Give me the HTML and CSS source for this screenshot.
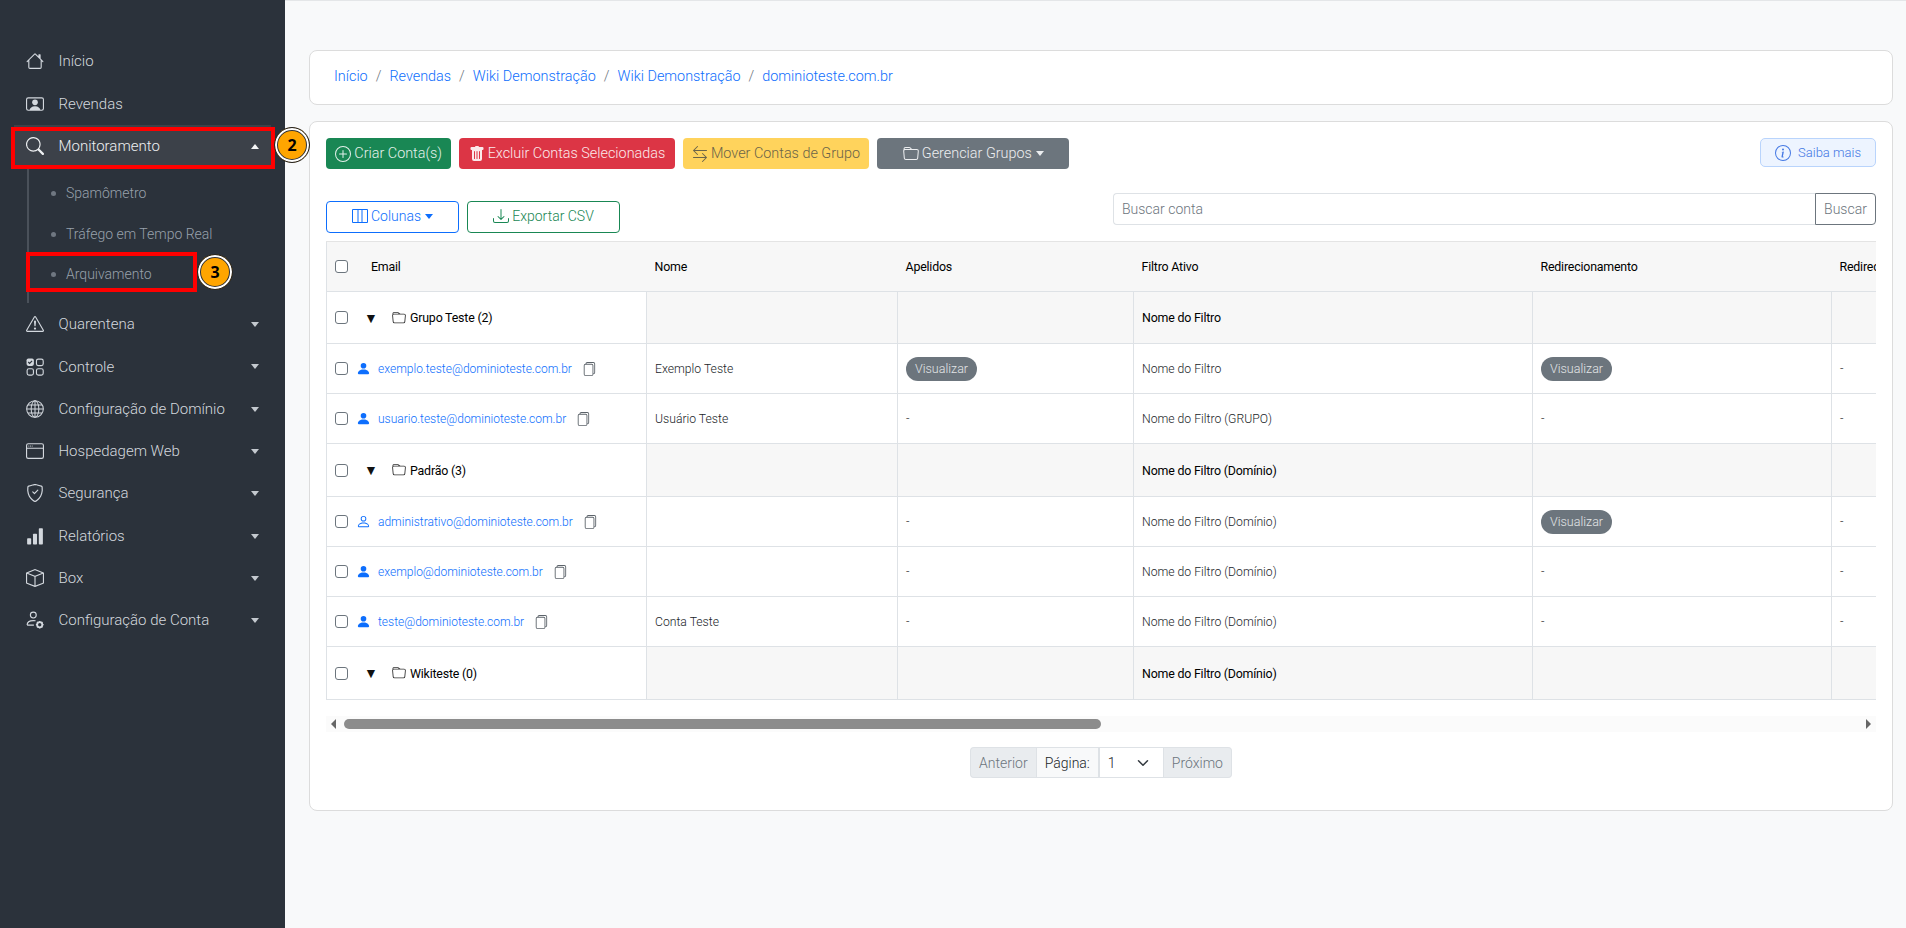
FILE: index.html
```html
<!DOCTYPE html>
<html lang="pt-BR">

<head>
    <meta charset="UTF-8">
    <title>Contas</title>
    <link rel="stylesheet" href="styles.css">
</head>

<body>
    <svg class="sprite" xmlns="http://www.w3.org/2000/svg">
        <symbol id="i-house" viewBox="0 0 16 16"><path d="M8.707 1.5a1 1 0 0 0-1.414 0L.646 8.146a.5.5 0 0 0 .708.708L2 8.207V13.5A1.5 1.5 0 0 0 3.5 15h9a1.5 1.5 0 0 0 1.5-1.5V8.207l.646.647a.5.5 0 0 0 .708-.708L13 5.793V2.5a.5.5 0 0 0-.5-.5h-1a.5.5 0 0 0-.5.5v1.293zM13 7.207V13.5a.5.5 0 0 1-.5.5h-9a.5.5 0 0 1-.5-.5V7.207l5-5z"/></symbol>
        <symbol id="i-video" viewBox="0 0 16 16"><path d="M8 9.05a2.5 2.5 0 1 0 0-5 2.5 2.5 0 0 0 0 5"/><path d="M2 2a2 2 0 0 0-2 2v8a2 2 0 0 0 2 2h12a2 2 0 0 0 2-2V4a2 2 0 0 0-2-2zm10.798 11c-.453-1.27-1.76-3-4.798-3-3.037 0-4.345 1.73-4.798 3H2a1 1 0 0 1-1-1V4a1 1 0 0 1 1-1h12a1 1 0 0 1 1 1v8a1 1 0 0 1-1 1z"/></symbol>
        <symbol id="i-search" viewBox="0 0 16 16"><path d="M11.742 10.344a6.5 6.5 0 1 0-1.397 1.398h-.001q.044.06.098.115l3.85 3.85a1 1 0 0 0 1.415-1.414l-3.85-3.85a1 1 0 0 0-.115-.1zM12 6.5a5.5 5.5 0 1 1-11 0 5.5 5.5 0 0 1 11 0"/></symbol>
        <symbol id="i-warn" viewBox="0 0 16 16"><path d="M7.938 2.016A.13.13 0 0 1 8.002 2a.13.13 0 0 1 .063.016.15.15 0 0 1 .054.057l6.857 11.667c.036.06.035.124.002.183a.2.2 0 0 1-.054.06.1.1 0 0 1-.066.017H1.146a.1.1 0 0 1-.066-.017.2.2 0 0 1-.054-.06.18.18 0 0 1 .002-.183L7.884 2.073a.15.15 0 0 1 .054-.057m1.044-.45a1.13 1.13 0 0 0-1.96 0L.165 13.233c-.457.778.091 1.767.98 1.767h13.713c.889 0 1.438-.99.98-1.767z"/><path d="M7.002 12a1 1 0 1 1 2 0 1 1 0 0 1-2 0M7.1 5.995a.905.905 0 1 1 1.8 0l-.35 3.507a.552.552 0 0 1-1.1 0z"/></symbol>
        <symbol id="i-grid" viewBox="0 0 16 16"><rect x=".5" y=".5" width="6.5" height="6.5" rx="1.6"/><path d="M2 3.6l1.2 1.2L5.4 2.5" fill="none" stroke="#2b323b" stroke-width="1.1"/><rect x="9.3" y="1" width="6" height="5.8" rx="1.6" fill="none" stroke="currentColor"/><rect x="1" y="9.6" width="5.6" height="5.6" rx="1.6" fill="none" stroke="currentColor"/><rect x="9.3" y="9.6" width="6" height="5.6" rx="1.6" fill="none" stroke="currentColor"/></symbol>
        <symbol id="i-globe" viewBox="0 0 16 16"><g fill="none" stroke="currentColor" stroke-width=".9"><circle cx="8" cy="8" r="7.4"/><ellipse cx="8" cy="8" rx="3.4" ry="7.4"/><path d="M8 .6v14.8M.6 8h14.8M1.6 4.4h12.8M1.6 11.6h12.8"/></g></symbol>
        <symbol id="i-window" viewBox="0 0 16 16"><path d="M2.5 4a.5.5 0 1 0 0-1 .5.5 0 0 0 0 1m2-.5a.5.5 0 1 1-1 0 .5.5 0 0 1 1 0m1 .5a.5.5 0 1 0 0-1 .5.5 0 0 0 0 1"/><path d="M2 1a2 2 0 0 0-2 2v10a2 2 0 0 0 2 2h12a2 2 0 0 0 2-2V3a2 2 0 0 0-2-2zm13 2v2H1V3a1 1 0 0 1 1-1h12a1 1 0 0 1 1 1M2 14a1 1 0 0 1-1-1V6h14v7a1 1 0 0 1-1 1z"/></symbol>
        <symbol id="i-shield" viewBox="0 0 16 16"><path d="M5.338 1.59a61 61 0 0 0-2.837.856.48.48 0 0 0-.328.39c-.554 4.157.726 7.19 2.253 9.188a10.7 10.7 0 0 0 2.287 2.233c.346.244.652.42.893.533q.18.085.293.118a1 1 0 0 0 .101.025 1 1 0 0 0 .1-.025q.114-.034.294-.118c.24-.113.547-.29.893-.533a10.7 10.7 0 0 0 2.287-2.233c1.527-1.997 2.807-5.031 2.253-9.188a.48.48 0 0 0-.328-.39c-.651-.213-1.75-.56-2.837-.855C9.552 1.29 8.531 1.067 8 1.067c-.53 0-1.552.223-2.662.524zM5.072.56C6.157.265 7.31 0 8 0s1.843.265 2.928.56c1.11.3 2.229.655 2.887.87a1.54 1.54 0 0 1 1.044 1.262c.596 4.477-.787 7.795-2.465 9.99a11.8 11.8 0 0 1-2.517 2.453 7 7 0 0 1-1.048.625c-.28.132-.581.24-.829.24s-.548-.108-.829-.24a7 7 0 0 1-1.048-.625 11.8 11.8 0 0 1-2.517-2.453C1.928 10.487.545 7.169 1.141 2.692A1.54 1.54 0 0 1 2.185 1.43 63 63 0 0 1 5.072.56"/><path d="M10.854 5.146a.5.5 0 0 1 0 .708l-3 3a.5.5 0 0 1-.708 0l-1.5-1.5a.5.5 0 1 1 .708-.708L7.5 7.793l2.646-2.647a.5.5 0 0 1 .708 0"/></symbol>
        <symbol id="i-bars" viewBox="0 0 16 16"><rect x="1" y="10" width="3.6" height="5.5" rx=".7"/><rect x="6.2" y="6" width="3.6" height="9.5" rx=".7"/><rect x="11.4" y="1" width="3.6" height="14.5" rx=".7"/></symbol>
        <symbol id="i-box" viewBox="0 0 16 16"><path d="M8.186 1.113a.5.5 0 0 0-.372 0L1.846 3.5 8 5.961 14.154 3.5zM15 4.239l-6.5 2.6v7.922l6.5-2.6V4.24zM7.5 14.762V6.838L1 4.239v7.925zM7.443.184a1.5 1.5 0 0 1 1.114 0l7.129 2.852A.5.5 0 0 1 16 3.5v8.662a1 1 0 0 1-.629.928l-7.185 2.874a.5.5 0 0 1-.372 0L.63 13.09a1 1 0 0 1-.63-.928V3.5a.5.5 0 0 1 .314-.464z"/></symbol>
        <symbol id="i-gear" viewBox="0 0 16 16"><circle cx="6.5" cy="3.6" r="2.6" fill="none" stroke="currentColor"/><path d="M1 12.5c0-2.6 2.2-4 5.5-4 .7 0 1.4.1 2 .2M1 12.5h6" fill="none" stroke="currentColor"/><circle cx="12.2" cy="12.2" r="2.3" fill="none" stroke="currentColor" stroke-width="1.6"/><path d="M12.2 8.8v1.2M12.2 14.4v1.2M8.8 12.2H10M14.4 12.2h1.2M9.8 9.8l.8.8M13.8 13.8l.8.8M14.6 9.8l-.8.8M10.6 13.8l-.8.8" stroke="currentColor" stroke-width="1.1"/></symbol>
        <symbol id="i-plus" viewBox="0 0 16 16"><path d="M8 15A7 7 0 1 1 8 1a7 7 0 0 1 0 14m0 1A8 8 0 1 0 8 0a8 8 0 0 0 0 16"/><path d="M8 4a.5.5 0 0 1 .5.5v3h3a.5.5 0 0 1 0 1h-3v3a.5.5 0 0 1-1 0v-3h-3a.5.5 0 0 1 0-1h3v-3A.5.5 0 0 1 8 4"/></symbol>
        <symbol id="i-trash" viewBox="0 0 16 16"><path d="M2.5 1a1 1 0 0 0-1 1v1a1 1 0 0 0 1 1H3v9a2 2 0 0 0 2 2h6a2 2 0 0 0 2-2V4h.5a1 1 0 0 0 1-1V2a1 1 0 0 0-1-1H10a1 1 0 0 0-1-1H7a1 1 0 0 0-1 1zm3 4a.5.5 0 0 1 .5.5v7a.5.5 0 0 1-1 0v-7a.5.5 0 0 1 .5-.5M8 5a.5.5 0 0 1 .5.5v7a.5.5 0 0 1-1 0v-7A.5.5 0 0 1 8 5m3 .5v7a.5.5 0 0 1-1 0v-7a.5.5 0 0 1 1 0"/></symbol>
        <symbol id="i-move" viewBox="0 0 16 16"><path d="M1 11.5a.5.5 0 0 0 .5.5h11.793l-3.147 3.146a.5.5 0 0 0 .708.708l4-4a.5.5 0 0 0 0-.708l-4-4a.5.5 0 0 0-.708.708L13.293 11H1.5a.5.5 0 0 0-.5.5m14-7a.5.5 0 0 1-.5.5H2.707l3.147 3.146a.5.5 0 1 1-.708.708l-4-4a.5.5 0 0 1 0-.708l4-4a.5.5 0 1 1 .708.708L2.707 4H14.5a.5.5 0 0 1 .5.5"/></symbol>
        <symbol id="i-folder" viewBox="0 0 16 16"><path d="M.54 3.87.5 3a2 2 0 0 1 2-2h3.672a2 2 0 0 1 1.414.586l.828.828A2 2 0 0 0 9.828 3h3.982a2 2 0 0 1 1.992 2.181l-.637 7A2 2 0 0 1 13.174 14H2.826a2 2 0 0 1-1.991-1.819l-.637-7a2 2 0 0 1 .342-1.31zM2.19 4a1 1 0 0 0-.996 1.09l.637 7a1 1 0 0 0 .995.91h10.348a1 1 0 0 0 .995-.91l.637-7A1 1 0 0 0 13.81 4zm4.69-1.707A1 1 0 0 0 6.172 2H2.5a1 1 0 0 0-1 .981l.006.139q.323-.119.684-.12h5.396z"/></symbol>
        <symbol id="i-columns" viewBox="0 0 16 16"><path d="M0 2a1 1 0 0 1 1-1h14a1 1 0 0 1 1 1v12a1 1 0 0 1-1 1H1a1 1 0 0 1-1-1zm1 0v12h4.5V2zm5.5 0v12h3V2zm4 0v12H15V2z"/></symbol>
        <symbol id="i-download" viewBox="0 0 16 16"><path d="M.5 9.9a.5.5 0 0 1 .5.5v2.5a1 1 0 0 0 1 1h12a1 1 0 0 0 1-1v-2.5a.5.5 0 0 1 1 0v2.5a2 2 0 0 1-2 2H2a2 2 0 0 1-2-2v-2.5a.5.5 0 0 1 .5-.5"/><path d="M7.646 11.854a.5.5 0 0 0 .708 0l3-3a.5.5 0 0 0-.708-.708L8.5 10.293V1.5a.5.5 0 0 0-1 0v8.793L5.354 8.146a.5.5 0 1 0-.708.708z"/></symbol>
        <symbol id="i-info" viewBox="0 0 16 16"><path d="M8 15A7 7 0 1 1 8 1a7 7 0 0 1 0 14m0 1A8 8 0 1 0 8 0a8 8 0 0 0 0 16"/><path d="m8.93 6.588-2.29.287-.082.38.45.083c.294.07.352.176.288.469l-.738 3.468c-.194.897.105 1.319.808 1.319.545 0 1.178-.252 1.465-.598l.088-.416c-.2.176-.492.246-.686.246-.275 0-.375-.193-.304-.533zM9 4.5a1 1 0 1 1-2 0 1 1 0 0 1 2 0"/></symbol>
        <symbol id="i-person" viewBox="0 0 16 16"><path d="M3 14s-1 0-1-1 1-4 6-4 6 3 6 4-1 1-1 1zm5-6a3 3 0 1 0 0-6 3 3 0 0 0 0 6"/></symbol>
        <symbol id="i-person-line" viewBox="0 0 16 16"><path d="M8 8a3 3 0 1 0 0-6 3 3 0 0 0 0 6m2-3a2 2 0 1 1-4 0 2 2 0 0 1 4 0m4 8c0 1-1 1-1 1H3s-1 0-1-1 1-4 6-4 6 3 6 4m-1-.004c-.001-.246-.154-.986-.832-1.664C11.516 10.68 10.289 10 8 10s-3.516.68-4.168 1.332c-.678.678-.83 1.418-.832 1.664z"/></symbol>
        <symbol id="i-copy" viewBox="0 0 16 16"><path d="M13 0H6a2 2 0 0 0-2 2 2 2 0 0 0-2 2v10a2 2 0 0 0 2 2h7a2 2 0 0 0 2-2 2 2 0 0 0 2-2V2a2 2 0 0 0-2-2m0 13V4a2 2 0 0 0-2-2H5a1 1 0 0 1 1-1h7a1 1 0 0 1 1 1v10a1 1 0 0 1-1 1M3 4a1 1 0 0 1 1-1h7a1 1 0 0 1 1 1v10a1 1 0 0 1-1 1H4a1 1 0 0 1-1-1z"/></symbol>
    </svg>

    <aside class="sidebar">
        <nav class="menu">
            <a class="menu-item"><svg class="menu-icon"><use href="#i-house"/></svg>Início</a>
            <a class="menu-item"><svg class="menu-icon"><use href="#i-video"/></svg>Revendas</a>
            <a class="menu-item active"><svg class="menu-icon"><use href="#i-search"/></svg>Monitoramento<span class="caret up"></span>
                <span class="mark mark-main"></span><span class="step step-two">2</span></a>
            <div class="submenu">
                <a class="sub-item">Spamômetro</a>
                <a class="sub-item">Tráfego em Tempo Real</a>
                <a class="sub-item">Arquivamento<span class="mark mark-sub"></span><span class="step step-three">3</span></a>
            </div>
            <a class="menu-item"><svg class="menu-icon"><use href="#i-warn"/></svg>Quarentena<span class="caret"></span></a>
            <a class="menu-item"><svg class="menu-icon"><use href="#i-grid"/></svg>Controle<span class="caret"></span></a>
            <a class="menu-item"><svg class="menu-icon"><use href="#i-globe"/></svg>Configuração de Domínio<span class="caret"></span></a>
            <a class="menu-item"><svg class="menu-icon"><use href="#i-window"/></svg>Hospedagem Web<span class="caret"></span></a>
            <a class="menu-item"><svg class="menu-icon"><use href="#i-shield"/></svg>Segurança<span class="caret"></span></a>
            <a class="menu-item"><svg class="menu-icon"><use href="#i-bars"/></svg>Relatórios<span class="caret"></span></a>
            <a class="menu-item"><svg class="menu-icon"><use href="#i-box"/></svg>Box<span class="caret"></span></a>
            <a class="menu-item"><svg class="menu-icon"><use href="#i-gear"/></svg>Configuração de Conta<span class="caret"></span></a>
        </nav>
    </aside>

    <main class="content">
        <div class="card crumbs">
            <a>Início</a><span class="sep">/</span>
            <a>Revendas</a><span class="sep">/</span>
            <a>Wiki Demonstração</a><span class="sep">/</span>
            <a>Wiki Demonstração</a><span class="sep">/</span>
            <a>dominioteste.com.br</a>
        </div>

        <section class="card accounts">
            <div class="toolbar">
                <button class="btn btn-green"><svg class="btn-icon"><use href="#i-plus"/></svg>Criar Conta(s)</button>
                <button class="btn btn-red"><svg class="btn-icon"><use href="#i-trash"/></svg>Excluir Contas Selecionadas</button>
                <button class="btn btn-yellow"><svg class="btn-icon"><use href="#i-move"/></svg>Mover Contas de Grupo</button>
                <button class="btn btn-gray"><svg class="btn-icon"><use href="#i-folder"/></svg>Gerenciar Grupos<span class="btn-caret"></span></button>
                <button class="btn-more"><svg class="btn-icon"><use href="#i-info"/></svg>Saiba mais</button>
            </div>

            <div class="filters">
                <div class="filter-buttons">
                    <button class="btn btn-outline-blue"><svg class="btn-icon"><use href="#i-columns"/></svg>Colunas<span class="btn-caret"></span></button>
                    <button class="btn btn-outline-green"><svg class="btn-icon"><use href="#i-download"/></svg>Exportar CSV</button>
                </div>
                <div class="search">
                    <input type="text" placeholder="Buscar conta">
                    <button>Buscar</button>
                </div>
            </div>

            <div class="table-wrap">
                <table>
                    <colgroup>
                        <col class="c-email"><col class="c-name"><col class="c-alias"><col class="c-filter"><col class="c-redir"><col class="c-redir">
                    </colgroup>
                    <thead>
                        <tr>
                            <th><div class="cell-row"><input type="checkbox"><span class="head-email">Email</span></div></th>
                            <th>Nome</th>
                            <th>Apelidos</th>
                            <th>Filtro Ativo</th>
                            <th>Redirecionamento</th>
                            <th>Redirecionamento</th>
                        </tr>
                    </thead>
                    <tbody>
                        <tr class="group">
                            <td><div class="cell-row"><input type="checkbox"><span class="arrow">▼</span><svg class="folder"><use href="#i-folder"/></svg>Grupo Teste (2)</div></td>
                            <td></td><td></td><td>Nome do Filtro</td><td></td><td></td>
                        </tr>
                        <tr>
                            <td><div class="cell-row"><input type="checkbox"><svg class="user"><use href="#i-person"/></svg><a>exemplo.teste@dominioteste.com.br</a><svg class="copy"><use href="#i-copy"/></svg></div></td>
                            <td>Exemplo Teste</td>
                            <td><span class="pill">Visualizar</span></td>
                            <td>Nome do Filtro</td>
                            <td><span class="pill">Visualizar</span></td>
                            <td>-</td>
                        </tr>
                        <tr>
                            <td><div class="cell-row"><input type="checkbox"><svg class="user"><use href="#i-person"/></svg><a>usuario.teste@dominioteste.com.br</a><svg class="copy"><use href="#i-copy"/></svg></div></td>
                            <td>Usuário Teste</td>
                            <td>-</td>
                            <td>Nome do Filtro (GRUPO)</td>
                            <td>-</td>
                            <td>-</td>
                        </tr>
                        <tr class="group">
                            <td><div class="cell-row"><input type="checkbox"><span class="arrow">▼</span><svg class="folder"><use href="#i-folder"/></svg>Padrão (3)</div></td>
                            <td></td><td></td><td>Nome do Filtro (Domínio)</td><td></td><td></td>
                        </tr>
                        <tr>
                            <td><div class="cell-row"><input type="checkbox"><svg class="user"><use href="#i-person-line"/></svg><a>administrativo@dominioteste.com.br</a><svg class="copy"><use href="#i-copy"/></svg></div></td>
                            <td></td>
                            <td>-</td>
                            <td>Nome do Filtro (Domínio)</td>
                            <td><span class="pill">Visualizar</span></td>
                            <td>-</td>
                        </tr>
                        <tr>
                            <td><div class="cell-row"><input type="checkbox"><svg class="user"><use href="#i-person"/></svg><a>exemplo@dominioteste.com.br</a><svg class="copy"><use href="#i-copy"/></svg></div></td>
                            <td></td>
                            <td>-</td>
                            <td>Nome do Filtro (Domínio)</td>
                            <td>-</td>
                            <td>-</td>
                        </tr>
                        <tr>
                            <td><div class="cell-row"><input type="checkbox"><svg class="user"><use href="#i-person"/></svg><a>teste@dominioteste.com.br</a><svg class="copy"><use href="#i-copy"/></svg></div></td>
                            <td>Conta Teste</td>
                            <td>-</td>
                            <td>Nome do Filtro (Domínio)</td>
                            <td>-</td>
                            <td>-</td>
                        </tr>
                        <tr class="group">
                            <td><div class="cell-row"><input type="checkbox"><span class="arrow">▼</span><svg class="folder"><use href="#i-folder"/></svg>Wikiteste (0)</div></td>
                            <td></td><td></td><td>Nome do Filtro (Domínio)</td><td></td><td></td>
                        </tr>
                    </tbody>
                </table>
            </div>

            <div class="scrollbar">
                <span class="scroll-left"></span>
                <div class="scroll-track"><div class="scroll-thumb"></div></div>
                <span class="scroll-right"></span>
            </div>

            <div class="pager">
                <span class="pager-btn">Anterior</span>
                <span class="pager-label">Página:</span>
                <span class="pager-select">1<svg viewBox="0 0 16 16" class="chevron"><path d="M2 5l6 6 6-6" fill="none" stroke="#343a40" stroke-width="2" stroke-linecap="round" stroke-linejoin="round"/></svg></span>
                <span class="pager-btn">Próximo</span>
            </div>
        </section>
    </main>
</body>

</html>
```

FILE: styles.css
```css
* {
    box-sizing: border-box;
}

body {
    display: flex;
    margin: 0;
    height: 928px;
    overflow: hidden;
    font-family: Roboto, "Liberation Sans", sans-serif;
    font-size: 14px;
    background-color: #f8f9fa;
    color: #212529;
}

.sprite {
    position: absolute;
    width: 0;
    height: 0;
}

svg {
    fill: currentColor;
    flex-shrink: 0;
}

/* sidebar */
.sidebar {
    width: 285px;
    flex-shrink: 0;
    background-color: #2b323b;
    padding: 40.2px 14px 0 14px;
}

.menu-item {
    position: relative;
    display: flex;
    align-items: center;
    height: 42.3px;
    padding-left: 12px;
    padding-right: 12px;
    font-size: 15px;
    font-weight: 300;
    color: #d3d8de;
}

.menu-item.active {
    background-color: #3c4149;
    color: #eef0f2;
}

.menu-icon {
    width: 18px;
    height: 18px;
    margin-right: 14.5px;
}

.caret {
    position: absolute;
    right: 12px;
    top: 19px;
    border-left: 4.5px solid transparent;
    border-right: 4.5px solid transparent;
    border-top: 5px solid #c4c9cf;
}

.caret.up {
    border-top: 0;
    border-bottom: 5px solid #f4f5f6;
}

.submenu {
    margin-left: 13px;
    border-left: 2px solid #4a515a;
    height: 136px;
    padding-top: 6px;
}

.sub-item {
    position: relative;
    display: flex;
    align-items: center;
    height: 40.5px;
    padding-left: 37px;
    font-size: 14px;
    font-weight: 300;
    color: #98a1ab;
}

.sub-item::before {
    content: "";
    position: absolute;
    left: 22px;
    top: 18px;
    width: 5px;
    height: 5px;
    border-radius: 50%;
    background-color: #6f7781;
}

/* marcacoes vermelhas e numeros do tutorial */
.mark {
    position: absolute;
    border: 4px solid #f00;
}

.mark-main {
    left: -3px;
    right: -4px;
    top: 2px;
    height: 42px;
}

.mark-sub {
    left: -3px;
    top: -2px;
    width: 171px;
    height: 40px;
}

.step {
    position: absolute;
    display: flex;
    align-items: center;
    justify-content: center;
    width: 36px;
    height: 36px;
    border-radius: 50%;
    background-color: #ffa500;
    border: 1px solid #222;
    box-shadow: inset 0 0 0 2px #fff, inset 0 0 0 3px #333;
    font-family: "Noto Sans", sans-serif;
    font-size: 16px;
    font-weight: 700;
    color: #000;
}

.step-two {
    right: -39px;
    top: 2px;
}

.step-three {
    left: 168px;
    top: 0;
}

/* content */
.content {
    flex: 1;
    min-width: 0;
    padding: 50px 13px 0 24px;
    border-top: 1px solid #e4e6e8;
}

.card {
    background-color: #fff;
    border: 1px solid #dcdcdc;
    border-radius: 8px;
}

.crumbs {
    display: flex;
    align-items: center;
    height: 55px;
    padding-left: 24px;
    padding-bottom: 2px;
    margin-bottom: 16px;
    margin-top: -1px;
    font-size: 14.4px;
    font-weight: 300;
}

.crumbs a {
    color: #0d6efd;
}

.sep {
    margin: 0 8px;
    color: #6c757d;
}

.accounts {
    height: 690px;
    padding: 16px 16px 0 16px;
}

.toolbar {
    display: flex;
    gap: 8px;
    align-items: flex-start;
}

.btn {
    display: inline-flex;
    align-items: center;
    height: 31px;
    padding: 0 8.3px;
    border: 1px solid transparent;
    border-radius: 4px;
    font-family: inherit;
    font-size: 14.4px;
    font-weight: 300;
    white-space: nowrap;
}

.btn-icon {
    width: 16px;
    height: 16px;
    margin-right: 3px;
}

.btn-caret {
    margin-left: 4px;
    border-left: 4px solid transparent;
    border-right: 4px solid transparent;
    border-top: 5px solid currentColor;
}

.btn-green {
    background-color: #198754;
    color: #e4f1eb;
}

.btn-red {
    background-color: #dc3545;
    color: #fbe9eb;
}

.btn-yellow {
    background-color: #ffd35c;
    color: #6b6449;
}

.btn-gray {
    background-color: #6c757d;
    color: #eceef0;
    padding: 0 24.5px;
}

.btn-more {
    display: inline-flex;
    align-items: center;
    margin-left: auto;
    height: 29px;
    padding: 0 14px;
    background-color: #edf4ff;
    border: 1px solid #b9d4fc;
    border-radius: 5px;
    color: #4478e4;
    font-family: inherit;
    font-size: 13px;
    font-weight: 300;
}

.btn-more .btn-icon {
    margin-right: 7px;
}

.filters {
    display: flex;
    justify-content: space-between;
    margin-top: 24px;
}

.filter-buttons {
    display: flex;
    gap: 8px;
    margin-top: 8px;
}

.filter-buttons .btn {
    height: 32px;
    font-size: 14px;
    padding-bottom: 2px;
}

.btn-outline-blue {
    width: 133px;
    justify-content: center;
    background-color: #fff;
    border-color: #0d6efd;
    color: #0d6efd;
}

.btn-outline-green {
    width: 153px;
    justify-content: center;
    background-color: #fff;
    border-color: #198754;
    color: #198754;
}

.search {
    display: flex;
    width: 763px;
    height: 32px;
}

.search input {
    flex: 1;
    min-width: 0;
    padding: 0 8px;
    border: 1px solid #dee2e6;
    border-right: 0;
    border-radius: 4px 0 0 4px;
    font-family: inherit;
    font-size: 14px;
    font-weight: 300;
}

.search input::placeholder {
    color: #6c757d;
}

.search button {
    width: 61px;
    padding: 0;
    background-color: #fff;
    border: 1px solid #6c757d;
    border-radius: 0 4px 4px 0;
    color: #6c757d;
    font-family: inherit;
    font-size: 14px;
    font-weight: 300;
}

/* tabela */
.table-wrap {
    margin-top: 8px;
    overflow: hidden;
}

table {
    width: 1804px;
    table-layout: fixed;
    border-collapse: collapse;
    font-size: 12.2px;
}

.c-email { width: 320px; }
.c-name { width: 251px; }
.c-alias { width: 236px; }
.c-filter { width: 399px; }
.c-redir { width: 299px; }

th {
    height: 50px;
    padding: 0 8px;
    background-color: #f7f7f7;
    border-top: 1px solid #e4e4e4;
    border-bottom: 1px solid #dee2e6;
    text-align: left;
    font-size: 12.4px;
    font-weight: 400;
    letter-spacing: -0.2px;
    color: #000;
}

th:first-child {
    border-left: 1px solid #dee2e6;
}

td {
    height: 50px;
    padding: 0 8px;
    border: 1px solid #dee2e6;
    font-weight: 300;
    overflow: hidden;
    white-space: nowrap;
}

.group td {
    height: 53px;
    background-color: #f7f7f7;
    font-size: 12.4px;
    font-weight: 400;
    letter-spacing: -0.2px;
    color: #000;
}

.group td:first-child {
    background-color: #fff;
}

thead + tbody tr:first-child td {
    height: 52px;
}

.cell-row {
    display: flex;
    align-items: center;
}

input[type="checkbox"] {
    appearance: none;
    width: 13px;
    height: 13px;
    margin: 0;
    border: 1px solid #6c757d;
    border-radius: 3px;
    background-color: #fff;
    flex-shrink: 0;
}

.head-email {
    margin-left: 23px;
}

.arrow {
    width: 14px;
    margin-left: 16px;
    margin-right: 14px;
    font-size: 14px;
    color: #111;
}

.folder {
    width: 14px;
    height: 14px;
    margin-right: 4px;
    color: #333;
}

.user {
    width: 15px;
    height: 15px;
    margin-left: 8px;
    margin-right: 7px;
    color: #0d6efd;
}

.cell-row a {
    font-size: 12px;
    color: #0d6efd;
}

.copy {
    width: 14px;
    height: 14px;
    margin-left: 10px;
    color: #5c636a;
}

.pill {
    display: inline-block;
    height: 24px;
    padding: 0 9px;
    line-height: 24px;
    border-radius: 12px;
    background-color: #6c757d;
    color: #e3e5e7;
    font-size: 12.5px;
}

/* barra de rolagem desenhada */
.scrollbar {
    display: flex;
    align-items: center;
    height: 16px;
    margin-top: 16px;
    padding: 0 5px;
    background-color: #fbfbfb;
}

.scroll-left {
    border-top: 5px solid transparent;
    border-bottom: 5px solid transparent;
    border-right: 5px solid #666;
}

.scroll-right {
    border-top: 5px solid transparent;
    border-bottom: 5px solid transparent;
    border-left: 5px solid #666;
}

.scroll-track {
    flex: 1;
    padding: 0 8px;
}

.scroll-thumb {
    width: 757px;
    height: 10px;
    border-radius: 5px;
    background-color: #8c8c8c;
}

.pager {
    display: flex;
    justify-content: center;
    margin-top: 15px;
    font-size: 14px;
    font-weight: 300;
}

.pager span {
    display: flex;
    align-items: center;
    height: 31px;
    border: 1px solid #dee2e6;
}

.pager-btn {
    padding: 0 8px;
    background-color: #e9ecef;
    color: #6c757d;
}

.pager-btn:first-child {
    border-radius: 4px 0 0 4px;
    border-right: 0;
}

.pager-btn:last-child {
    border-radius: 0 4px 4px 0;
    border-left: 0;
}

.pager-label {
    padding: 0 8px;
    background-color: #f8f9fa;
    color: #212529;
}

.pager-select {
    justify-content: space-between;
    width: 65px;
    padding: 0 14px 0 8px;
    background-color: #fff;
}

.chevron {
    width: 12px;
    height: 12px;
}
```
